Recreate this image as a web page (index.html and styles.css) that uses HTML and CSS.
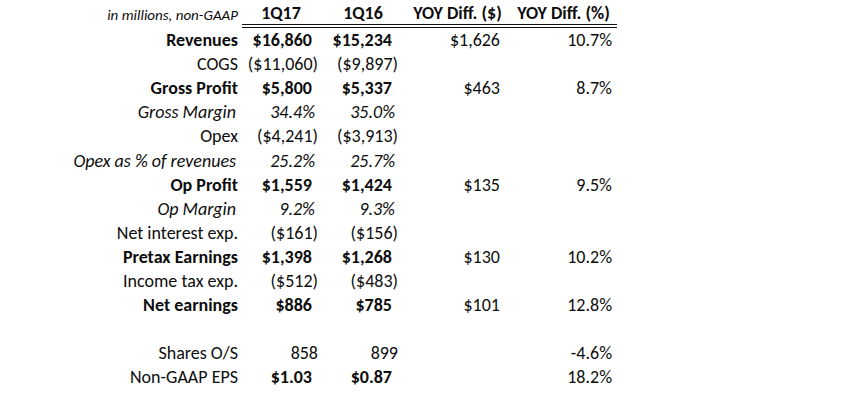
FILE: index.html
```html
<!DOCTYPE html>
<html>
<head>
<meta charset="utf-8">
<link rel="stylesheet" href="styles.css">
</head>
<body>
<div class="sheet">
  <div class="lbl hdr note">in millions, non-GAAP</div>
  <div class="hdr ch">1Q17</div>
  <div class="hdr ch c2h">1Q16</div>
  <div class="hdr ch c3h">YOY Diff. ($)</div>
  <div class="hdr ch">YOY Diff. (%)</div>

  <div class="lbl b">Revenues</div>
  <div class="num b acc">$16,860</div>
  <div class="num b acc">$15,234</div>
  <div class="num d">$1,626</div>
  <div class="num p">10.7%</div>

  <div class="lbl">COGS</div>
  <div class="num">($11,060)</div>
  <div class="num">($9,897)</div>
  <div></div>
  <div></div>

  <div class="lbl b">Gross Profit</div>
  <div class="num b acc">$5,800</div>
  <div class="num b acc">$5,337</div>
  <div class="num d">$463</div>
  <div class="num p">8.7%</div>

  <div class="lbl i">Gross Margin</div>
  <div class="num i pct">34.4%</div>
  <div class="num i pct">35.0%</div>
  <div></div>
  <div></div>

  <div class="lbl">Opex</div>
  <div class="num">($4,241)</div>
  <div class="num">($3,913)</div>
  <div></div>
  <div></div>

  <div class="lbl i">Opex as % of revenues</div>
  <div class="num i pct">25.2%</div>
  <div class="num i pct">25.7%</div>
  <div></div>
  <div></div>

  <div class="lbl b">Op Profit</div>
  <div class="num b acc">$1,559</div>
  <div class="num b acc">$1,424</div>
  <div class="num d">$135</div>
  <div class="num p">9.5%</div>

  <div class="lbl i">Op Margin</div>
  <div class="num i pct">9.2%</div>
  <div class="num i pct">9.3%</div>
  <div></div>
  <div></div>

  <div class="lbl">Net interest exp.</div>
  <div class="num">($161)</div>
  <div class="num">($156)</div>
  <div></div>
  <div></div>

  <div class="lbl b">Pretax Earnings</div>
  <div class="num b acc">$1,398</div>
  <div class="num b acc">$1,268</div>
  <div class="num d">$130</div>
  <div class="num p">10.2%</div>

  <div class="lbl">Income tax exp.</div>
  <div class="num">($512)</div>
  <div class="num">($483)</div>
  <div></div>
  <div></div>

  <div class="lbl b">Net earnings</div>
  <div class="num b acc">$886</div>
  <div class="num b acc">$785</div>
  <div class="num d">$101</div>
  <div class="num p">12.8%</div>

  <div class="blank"></div>
  <div></div>
  <div></div>
  <div></div>
  <div></div>

  <div class="lbl">Shares O/S</div>
  <div class="num">858</div>
  <div class="num">899</div>
  <div></div>
  <div class="num p">-4.6%</div>

  <div class="lbl">Non-GAAP EPS</div>
  <div class="num b acc">$1.03</div>
  <div class="num b acc">$0.87</div>
  <div></div>
  <div class="num p">18.2%</div>
</div>
</body>
</html>
```

FILE: styles.css
```css
html, body {
  margin: 0;
  padding: 0;
  background: #ffffff;
}

body {
  width: 860px;
  height: 414px;
  overflow: hidden;
  font-family: "Carlito", "Lato", sans-serif;
  font-size: 18px;
  color: #0d0d0d;
}

.sheet {
  display: grid;
  grid-template-columns: 242px 78px 80px 110px 107px;
  grid-template-rows: 28px;
  grid-auto-rows: 24.1px;
}

.sheet > div {
  display: flex;
  align-items: center;
  white-space: nowrap;
}

.hdr {
  box-sizing: border-box;
  height: 28px;
  padding-top: 1px;
  font-weight: bold;
}

.ch {
  justify-content: center;
  border-bottom: 4px double #111111;
}

.c2h {
  padding-left: 6px;
}

.c3h {
  padding-left: 5px;
}

.lbl {
  justify-content: flex-end;
  padding-right: 4px;
}

.note {
  font-style: italic;
  font-weight: normal;
  font-size: 15px;
}

.num {
  justify-content: flex-end;
  padding-right: 2px;
}

.acc {
  padding-right: 8px;
}

.pct {
  padding-right: 5px;
}

.d {
  padding-right: 10px;
}

.p {
  padding-right: 5px;
}

.b {
  font-weight: bold;
}

.i {
  font-style: italic;
}

.lbl.i {
  padding-right: 6px;
}
```
